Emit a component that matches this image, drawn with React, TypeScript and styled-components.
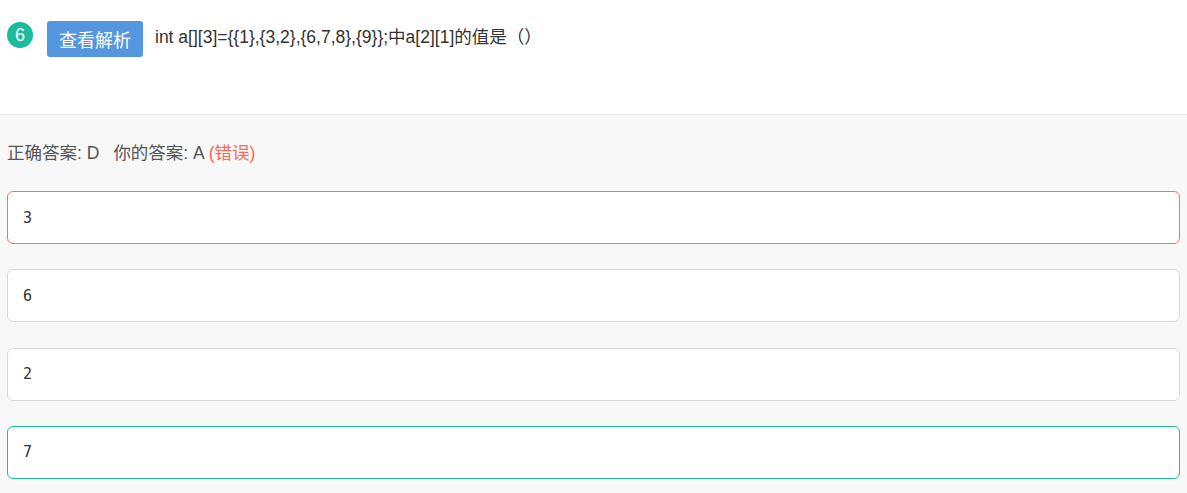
import React from "react";
import styled, { createGlobalStyle } from "styled-components";

const GlobalStyle = createGlobalStyle`
  html, body {
    margin: 0;
    padding: 0;
    background: #f8f8f8;
  }
  body {
    font-family: "Liberation Sans", "Noto Sans CJK SC", sans-serif;
    color: #333;
  }
`;

const Page = styled.div`
  width: 1187px;
  min-height: 493px;
  background: #f8f8f8;
`;

const Header = styled.header`
  height: 115px;
  background: #fff;
  border-bottom: 1px solid #e8e8e8;
  padding: 21px 7px 0;
  box-sizing: border-box;
`;

const QuestionRow = styled.div`
  display: flex;
  align-items: flex-start;
  height: 36px;
`;

const Badge = styled.span`
  width: 26px;
  height: 26px;
  margin-top: 1px;
  border-radius: 50%;
  background: #1abc9c;
  color: #fff;
  font-size: 18px;
  line-height: 26px;
  text-align: center;
  margin-right: 14px;
  flex: none;
`;

const AnalysisButton = styled.button`
  width: 96px;
  height: 36px;
  border: none;
  border-radius: 3px;
  background: #5596e0;
  color: #fff;
  font-family: "Liberation Sans", "Noto Sans CJK SC", sans-serif;
  font-size: 18px;
  padding: 0;
  margin-right: 12px;
  cursor: pointer;
  flex: none;
`;

const QuestionText = styled.span`
  font-size: 17.5px;
  line-height: 24px;
  margin-top: 4px;
  color: #333;
`;

const Body = styled.section`
  padding: 26px 7px 14px;
`;

const ResultLine = styled.div`
  font-size: 17.5px;
  line-height: 24px;
  color: #555;
  margin-bottom: 26px;
`;

const Spacer = styled.span`
  display: inline-block;
  width: 14px;
`;

const Wrong = styled.span`
  color: #f56b57;
`;

const Options = styled.div`
  display: flex;
  flex-direction: column;
  gap: 25.33px;
`;

const Option = styled.div<{ $state: "wrong" | "right" | "none" }>`
  height: 53px;
  box-sizing: border-box;
  background: #fff;
  border: 1px solid
    ${(p) =>
      p.$state === "wrong" ? "#f5735c" : p.$state === "right" ? "#1fbc9c" : "#d9d9d9"};
  border-radius: 6px;
  display: flex;
  align-items: center;
  padding: 0 15px;
  font-family: "DejaVu Sans Mono", "Liberation Mono", monospace;
  font-size: 15px;
  color: #333;
`;

const options: { text: string; state: "wrong" | "right" | "none" }[] = [
  { text: "3", state: "wrong" },
  { text: "6", state: "none" },
  { text: "2", state: "none" },
  { text: "7", state: "right" },
];

export default function App() {
  return (
    <Page>
      <GlobalStyle />
      <Header>
        <QuestionRow>
          <Badge>6</Badge>
          <AnalysisButton>查看解析</AnalysisButton>
          <QuestionText>int a[][3]={"{{1},{3,2},{6,7,8},{9}}"};中a[2][1]的值是（）</QuestionText>
        </QuestionRow>
      </Header>
      <Body>
        <ResultLine>
          正确答案: D<Spacer />你的答案: A <Wrong>(错误)</Wrong>
        </ResultLine>
        <Options>
          {options.map((o, i) => (
            <Option key={i} $state={o.state}>
              {o.text}
            </Option>
          ))}
        </Options>
      </Body>
    </Page>
  );
}
